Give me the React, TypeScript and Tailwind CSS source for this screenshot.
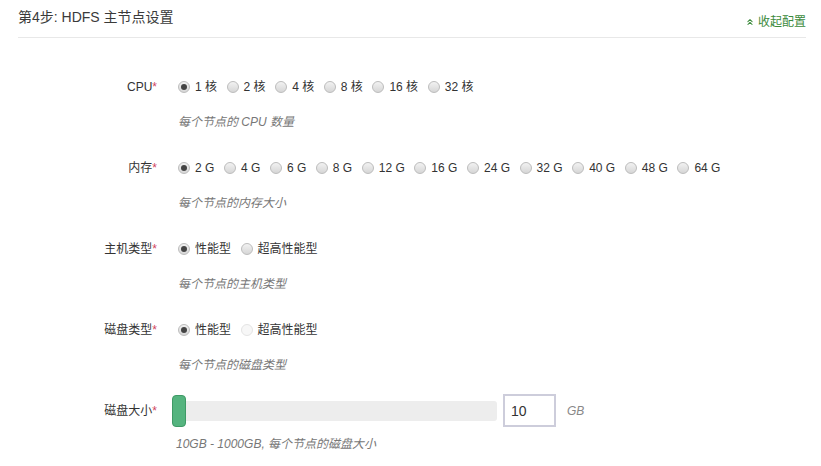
import { ChevronsUp } from "lucide-react";

const cpuOptions = ["1 核", "2 核", "4 核", "8 核", "16 核", "32 核"];
const memOptions = ["2 G", "4 G", "6 G", "8 G", "12 G", "16 G", "24 G", "32 G", "40 G", "48 G", "64 G"];

function Radio({ checked, disabled }: { checked?: boolean; disabled?: boolean }) {
  return (
    <span
      className={`w-3 h-3 rounded-full border flex items-center justify-center shrink-0 ${
        disabled
          ? "border-[#e4e4e4] bg-[#f7f7f7]"
          : "border-[#bcbcbc] bg-gradient-to-b from-[#f2f2f2] to-[#d6d6d6]"
      }`}
    >
      {checked && <span className="w-[6px] h-[6px] rounded-full bg-[#444]" />}
    </span>
  );
}

function RadioGroup({ options, selected, disabled = [] }: { options: string[]; selected: number; disabled?: number[] }) {
  return (
    <div className="flex items-center gap-[9.6px] h-5">
      {options.map((opt, i) => (
        <label key={opt} className="flex items-center gap-[5px] text-xs text-[#333] whitespace-nowrap">
          <Radio checked={i === selected} disabled={disabled.includes(i)} />
          {opt}
        </label>
      ))}
    </div>
  );
}

function Label({ children }: { children: string }) {
  return (
    <div className="w-[140px] shrink-0 text-right text-xs text-[#333] pr-[1px]">
      {children}
      <span className="text-[#d0455e]">*</span>
    </div>
  );
}

function Help({ children }: { children: string }) {
  return <p className="ml-[160px] mt-[17px] h-[17px] leading-[17px] text-xs italic text-[#777]">{children}</p>;
}

function Field({ label, help, children }: { label: string; help: string; children: React.ReactNode }) {
  return (
    <div className="mb-[27px]">
      <div className="flex items-center h-5">
        <Label>{label}</Label>
        <div className="ml-5">{children}</div>
      </div>
      <Help>{help}</Help>
    </div>
  );
}

export default function App() {
  return (
    <div className="w-[821px] h-[466px] bg-white pl-[18px] pr-[15px] font-['Liberation_Sans','Noto_Sans_CJK_SC',sans-serif] overflow-hidden">
      <div className="flex items-end justify-between pt-[7px] pb-[7px] border-b border-[#e8e8e8]">
        <h2 className="text-sm leading-5 text-[#3a3a3a] mb-[3px]">第4步: HDFS 主节点设置</h2>
        <a className="flex items-center gap-[3px] text-xs leading-4 text-[#3b8a3b]">
          <ChevronsUp size={10} strokeWidth={2.5} />
          收起配置
        </a>
      </div>

      <div className="pt-[39px]">
        <Field label="CPU" help="每个节点的 CPU 数量">
          <RadioGroup options={cpuOptions} selected={0} />
        </Field>
        <Field label="内存" help="每个节点的内存大小">
          <RadioGroup options={memOptions} selected={0} />
        </Field>
        <Field label="主机类型" help="每个节点的主机类型">
          <RadioGroup options={["性能型", "超高性能型"]} selected={0} />
        </Field>
        <Field label="磁盘类型" help="每个节点的磁盘类型">
          <RadioGroup options={["性能型", "超高性能型"]} selected={0} disabled={[1]} />
        </Field>

        <div className="-mt-[7px]">
          <div className="flex items-center h-[33px]">
            <Label>磁盘大小</Label>
            <div className="ml-[14px] flex items-center">
              <div className="relative w-[325px] h-5 bg-[#ededed] rounded-[3px]">
                <div className="absolute left-0 -top-[6px] w-[14px] h-[32px] bg-[#55b47f] border border-[#3f9a66] rounded-[4px]" />
              </div>
              <div className="ml-[6px] w-[53px] h-[33px] border-2 border-[#cdcddb] flex items-center pl-[6px] text-sm text-[#333]">
                10
              </div>
              <span className="ml-[11px] text-xs italic text-[#888]">GB</span>
            </div>
          </div>
          <p className="ml-[158px] mt-[9px] h-[17px] leading-[17px] text-xs italic text-[#777]">
            10GB - 1000GB, 每个节点的磁盘大小
          </p>
        </div>
      </div>
    </div>
  );
}
